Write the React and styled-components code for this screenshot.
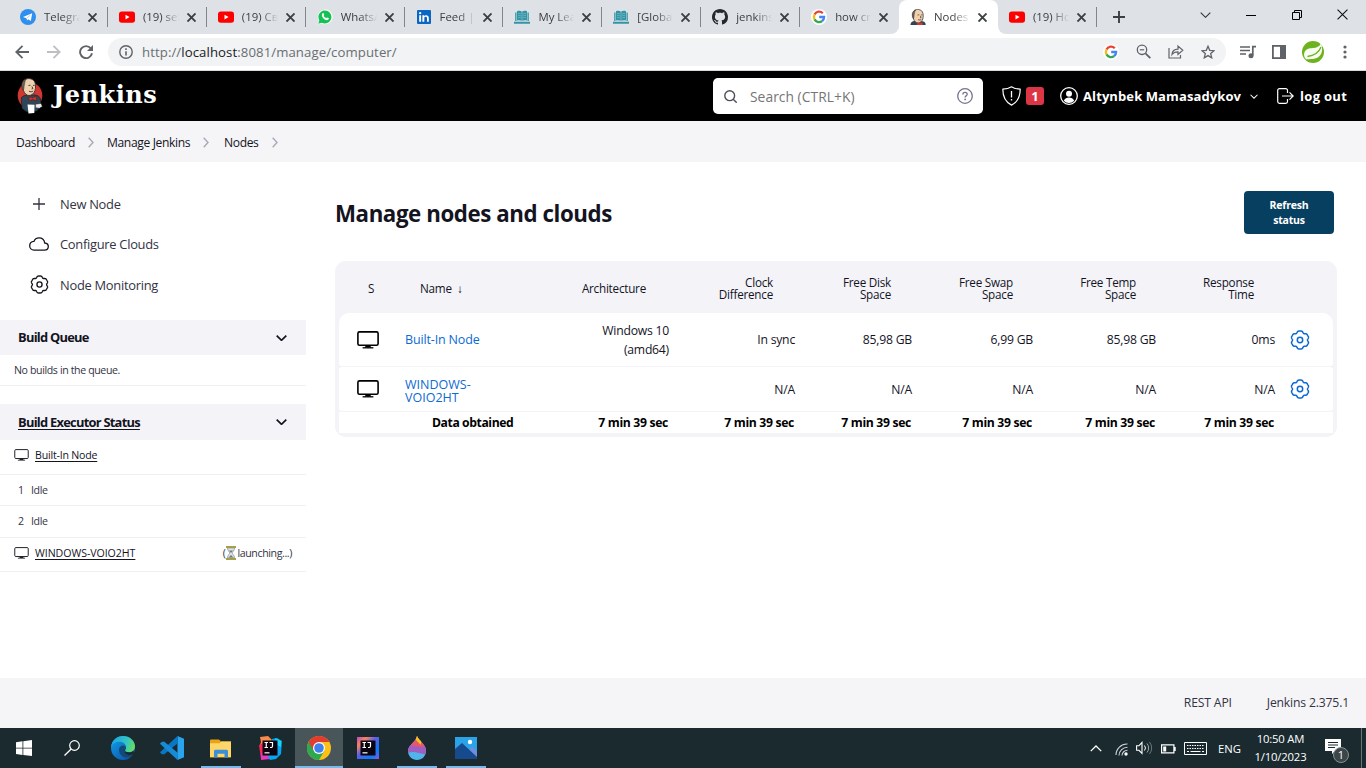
import React from "react";
import styled, { createGlobalStyle } from "styled-components";

const Global = createGlobalStyle`
  * { box-sizing: border-box; }
  html, body { margin: 0; padding: 0; background: #fff; }
  body {
    width: 1366px; height: 768px; overflow: hidden;
    font-family: "Open Sans", "Noto Sans", "Liberation Sans", sans-serif;
    color: #14141f;
  }
  svg { display: block; flex: none; }
`;

/* ---------- icons ---------- */

const Svg = ({ s = 16, w, h, vb, children, ...rest }) => (
  <svg width={w || s} height={h || s} viewBox={vb || `0 0 ${w || s} ${h || s}`} fill="none" {...rest}>
    {children}
  </svg>
);

/* six wide lobes separated by shallow notches */
const GEAR = (() => {
  const pts = [];
  for (let i = 0; i < 180; i++) {
    const t = (i / 180) * Math.PI * 2;
    const notch = Math.pow((1 - Math.cos(6 * t)) / 2, 2.2);
    const tip = Math.pow((1 + Math.cos(6 * t)) / 2, 4) * 0.25;
    const r = 9.15 - 1.7 * notch - tip;
    pts.push(`${(10 + r * Math.sin(t)).toFixed(2)} ${(10 - r * Math.cos(t)).toFixed(2)}`);
  }
  return `M${pts.join("L")}Z`;
})();

const Gear = ({ color = "#14141f", size = 20, sw = 1.5 }) => (
  <Svg s={size} vb="0 0 20 20">
    <path d={GEAR} stroke={color} strokeWidth={sw} strokeLinejoin="round" />
    <circle cx="10" cy="10" r="2.7" stroke={color} strokeWidth={sw} />
  </Svg>
);

const Computer = ({ w = 22, h = 18, sw = 1.6, color = "#000" }) => (
  <Svg w={w} h={h} vb="0 0 22 18">
    <rect x="0.9" y="0.9" width="20.2" height="13.4" rx="1.6" stroke={color} strokeWidth={sw} />
    <path d="M8.6 14.3h4.8l.6 2.2H8z" fill={color} />
    <path d="M5.6 16.8h10.8" stroke={color} strokeWidth="1.3" />
  </Svg>
);

const Cloud = () => (
  <Svg w={20} h={14}>
    <path d="M5 13.1h10.4c2.2 0 3.9-1.5 3.9-3.6 0-2-1.6-3.3-3.6-3.5C15.300 2.800 12.900.8 10 .8 7.500.8 5.700 2.300 4.900 4.400 2.500 4.600.7 6.300.7 8.700c0 2.500 1.900 4.400 4.300 4.400Z" stroke="#14141f" strokeWidth="1.3" />
  </Svg>
);

const Plus = ({ size = 12, color = "#333343", sw = 1.3 }) => (
  <Svg s={size} vb="0 0 12 12">
    <path d="M6 0v12M0 6h12" stroke={color} strokeWidth={sw} />
  </Svg>
);

const Chevron = ({ w = 11, h = 6, color = "#14141f", sw = 1.7, up }) => (
  <Svg w={w} h={h} vb="0 0 11 6">
    <path d={up ? "M.7 5.4 5.500.7l4.800 4.700" : "M.7.6l4.800 4.700L10.300.6"} stroke={color} strokeWidth={sw} />
  </Svg>
);

const CrumbArrow = () => (
  <Svg w={6} h={11}>
    <path d="M.7.8l4.300 4.700-4.300 4.700" stroke="#a9a9b8" strokeWidth="1.4" />
  </Svg>
);

const Close = ({ size = 8, color = "#3c4043", sw = 1.7 }) => (
  <Svg s={size} vb="0 0 8 8">
    <path d="M.4.4l7.200 7.200M7.600.4L.4 7.600" stroke={color} strokeWidth={sw} />
  </Svg>
);

const Telegram = () => (
  <Svg>
    <circle cx="8" cy="8" r="8" fill="#2f8fef" />
    <path d="M3 7.900 12.200 4.200 10.800 11.900 8.200 10.200 7 11.500 6.500 9.200z" fill="#fff" />
    <path d="M6.500 9.200 10.500 6" stroke="#9cc9f5" strokeWidth=".8" />
  </Svg>
);
const YouTube = () => (
  <Svg>
    <rect x="0" y="2.400" width="16" height="11.400" rx="2.800" fill="#f00" />
    <path d="M6.500 5.700v4.800L10.600 8.100z" fill="#fff" />
  </Svg>
);
const WhatsApp = () => (
  <Svg>
    <path d="M.5 15.500 1.700 11.500A7.400 7.400 0 1 1 4.600 14.400z" fill="#fff" />
    <path d="M1.300 14.700 2.300 11.300A6.500 6.500 0 1 1 4.800 13.700z" fill="#14c254" />
    <path d="M5.400 4.500c.6-.7 1.200-.3 1.300 0l.5 1.300c.1.400-.6.900-.5 1.100.6 1.100 1.400 1.800 2.500 2.200.3.100.7-.8 1.100-.7l1.400.7c.4.300.1 1.300-.5 1.700-2.800 1.700-8-3.500-5.800-6.300z" fill="#fff" />
  </Svg>
);
const LinkedIn = () => (
  <Svg>
    <rect x="1" y="1" width="14" height="14" rx="1" fill="#0a66c2" />
    <path d="M3.200 6.300h1.900v6.500H3.200zM6.400 6.300h1.800v.9c.9-1.500 4.600-1.600 4.600 1.700v3.900H11V9.300c0-2-2.700-1.800-2.700 0v3.500H6.400z" fill="#fff" />
    <circle cx="4.150" cy="4.200" r="1.150" fill="#fff" />
  </Svg>
);
const BookSite = () => (
  <Svg>
    <path d="M1.200 3.500h1.300v8.500H1.200zM13.500 3.500h1.300v8.500h-1.300zM0 12.800h16v1.900H0z" fill="#3295a6" />
    <path d="M3 2.300c1.800-.8 3.500-.6 4.800.3v9.200c-1.300-.7-3-.9-4.800-.3zM13 2.300c-1.800-.8-3.500-.6-4.800.3v9.200c1.300-.7 3-.9 4.800-.3z" fill="#3295a6" />
    <path d="M4 4.700c1-.3 2-.3 2.800.1M4 6.700c1-.3 2-.3 2.800.1M4 8.700c1-.3 2-.3 2.800.1M9.200 4.800c.9-.4 1.800-.4 2.800-.1M9.200 6.800c.9-.4 1.800-.4 2.800-.1M9.200 8.800c.9-.4 1.800-.4 2.800-.1" stroke="#8fc8d1" strokeWidth=".6" />
  </Svg>
);
const GitHub = () => (
  <Svg>
    <path fill="#24292f" d="M8 0C3.580 0 0 3.580 0 8c0 3.540 2.290 6.530 5.470 7.590.4.070.55-.17.55-.38 0-.19-.01-.82-.01-1.490-2.010.37-2.530-.49-2.690-.94-.09-.23-.48-.94-.82-1.130-.28-.15-.68-.52-.01-.53.63-.01 1.080.58 1.230.82.72 1.210 1.870.87 2.330.66.07-.52.28-.87.51-1.070-1.780-.2-3.640-.89-3.640-3.950 0-.87.31-1.590.82-2.150-.08-.2-.36-1.020.08-2.120 0 0 .67-.21 2.200.82.64-.18 1.320-.27 2-.27s1.360.09 2 .27c1.530-1.040 2.200-.82 2.200-.82.44 1.100.16 1.920.08 2.120.51.56.82 1.270.82 2.150 0 3.070-1.870 3.750-3.650 3.950.29.25.54.73.54 1.480 0 1.070-.01 1.930-.01 2.200 0 .21.15.46.55.38A8.010 8.010 0 0 0 16 8c0-4.420-3.580-8-8-8z" />
  </Svg>
);
const Google = ({ s = 16 }) => (
  <Svg s={s} vb="0 0 16 16">
    <circle cx="8" cy="8" r="8" fill="#fff" />
    <g strokeWidth="2.300">
      <path d="M11.800 4.200A5.100 5.100 0 0 0 3.500 5.600" stroke="#ea4335" />
      <path d="M3.500 5.600a5.100 5.100 0 0 0 0 4.800" stroke="#fbbc05" />
      <path d="M3.500 10.400a5.100 5.100 0 0 0 7.700 1.600" stroke="#34a853" />
      <path d="M11.200 12A5.100 5.100 0 0 0 13.100 8H8.200" stroke="#4285f4" />
    </g>
  </Svg>
);

const ButlerHead = () => (
  <g>
    <path d="M6.400 12.500C4.800 9 5 4 7.500 2c3-2.400 8-1.700 10 1.500 1.300 2.200 1.300 6.500.5 9-1 3.200-3.500 5-6 5-2.300 0-4.300-1.800-5.600-5z" fill="#efd0b0" stroke="#3b2a24" strokeWidth=".9" />
    <path d="M6.300 12.300c-2-2.800-2.200-6.800-.2-9.200C7 1.900 8 1.300 9.200 1 7.600 3.200 7.900 5 7.300 7c-.4 1.600 0 3.500-1 5.300z" fill="#6d6259" stroke="#3b2a24" strokeWidth=".5" />
    <path d="M11.500 7.500l2-.3M16 7.300l1.600.2M14.900 8.400l1 2.200-1.300.4M12 13.200c1.500.8 3 .7 4.200-.2" stroke="#3b2a24" strokeWidth=".9" />
  </g>
);
const JenkinsFav = () => (
  <Svg vb="2 0 20 20">
    <path d="M2.500 20c.3-3 1.500-4.500 4.500-5l11 .2c2.500.5 3.500 2 3.600 4.800z" fill="#2f4558" />
    <ButlerHead />
    <path d="M11 16.500l3.200 1.300 3.300-1.200.3 3.400h-7z" fill="#d8382c" />
  </Svg>
);
const JenkinsLogo = () => (
  <Svg w={26} h={36}>
    <ellipse cx="13" cy="17.500" rx="12.300" ry="13" fill="#d13832" />
    <path d="M4.200 20c1-2 4-3 7-3h7c3 .3 5 2 5.300 4.500l.5 6-4 5.500-10 1-5-3.500z" fill="#2e4656" stroke="#10181e" strokeWidth=".6" />
    <ButlerHead />
    <path d="M12 18.500l3.400 1.600 3.800-1.700.3 4.200-4-1.200-3.200 1.300z" fill="#d8382c" stroke="#5a1410" strokeWidth=".5" />
    <path d="M10.500 26.500l7 .3-.2 8.200-5.800.5z" fill="#fff" />
    <path d="M18.500 26.200l5.500-.8 1.300 3-3 1.900-3.600-.6z" fill="#ececec" stroke="#333" strokeWidth=".5" />
  </Svg>
);

/* ---------- browser window ---------- */

const Screen = styled.div`
  width: 1366px; height: 768px; display: flex; flex-direction: column; overflow: hidden;
`;

const TabStrip = styled.div`
  height: 34px; background: #dee1e6; display: flex; padding-left: 9px; flex: none;
`;
const tabRadius = { active: "8px 8px 0 0", right: "0 0 8px 0", left: "0 0 0 8px", none: "0" };
const TabBox = styled.div`
  width: 98.900px; height: 34px; display: flex; align-items: center; padding-left: 11px;
  background: ${(p) => (p.$active ? "#fff" : "#dee1e6")};
  border-radius: ${(p) => tabRadius[p.$active ? "active" : p.$edge || "none"]};
`;
const TabCorner = styled.div`background: ${(p) => (p.$edge ? "#fff" : "#dee1e6")};`;
const TabTitle = styled.div`
  width: 37px; margin-left: 8px; overflow: hidden; white-space: nowrap;
  font-size: 11.400px; line-height: 18px; color: #3c4043;
  mask-image: linear-gradient(90deg, #000 50%, transparent 98%);
`;
const TabClose = styled.div`margin-left: 7px;`;
const TabRule = styled.div`
  width: 1px; height: 20px; margin-left: 10px; background: ${(p) => (p.$hide ? "transparent" : "#80868b")};
`;
const WindowTools = styled.div`
  flex: 1; display: flex; align-items: center; justify-content: flex-end; gap: 35.500px; padding: 0 18px 5px 0;
`;
const NewTab = styled.div`align-self: center; margin-left: 16px;`;

const Tab = ({ icon, title, active, edge, noRule }) => (
  <TabCorner $edge={edge}>
    <TabBox $active={active} $edge={edge}>
      {icon}
      <TabTitle>{title}</TabTitle>
      <TabClose><Close size={9} /></TabClose>
      <TabRule $hide={noRule} />
    </TabBox>
  </TabCorner>
);

const Toolbar = styled.div`
  height: 37px; flex: none; background: #fff; border-bottom: 1px solid #d5d9dc;
  display: flex; align-items: center; padding: 0 0 1px 15px;
`;
const NavIcons = styled.div`display: flex; align-items: center; gap: 18px; width: 93px;`;
const Address = styled.div`
  width: 1118px; height: 28px; border-radius: 14px; background: #f1f3f4;
  display: flex; align-items: center; padding: 0 11px;
`;
const Url = styled.div`
  margin-left: 9px; flex: 1; font-size: 13.200px; line-height: 20px; color: #6a6e73; letter-spacing: 0.080px;
  b { font-weight: 400; color: #202124; }
`;
const AddressIcons = styled.div`display: flex; align-items: center; gap: 17px;`;
const ToolIcons = styled.div`display: flex; align-items: center; gap: 14px; margin-left: 14px;`;
const Menu = styled.div`margin-left: 5px;`;

/* ---------- jenkins ---------- */

const Header = styled.header`
  height: 50px; flex: none; background: #000; color: #fff; display: flex; align-items: center; padding-left: 17px;
`;
const Wordmark = styled.div`
  font-family: "DejaVu Serif", serif; font-weight: 700; font-size: 24px; line-height: 30px; flex: none;
  width: 660px; margin-left: 10px; margin-top: -3px; letter-spacing: 0.500px;
`;
const SearchBox = styled.div`
  width: 270px; height: 36px; border-radius: 5px; background: #fff; display: flex; align-items: center; padding: 0 10px 0 11px; flex: none;
`;
const Placeholder = styled.div`flex: 1; margin-left: 13px; font-size: 13.800px; letter-spacing: 0.050px; color: #757575;`;
const Alert = styled.div`display: flex; align-items: center; margin-left: 19px;`;
const Badge = styled.div`
  width: 18px; height: 18px; margin-left: 5px; border-radius: 3px; background: #dc3545;
  font-size: 13px; font-weight: 700; line-height: 18px; text-align: center;
`;
const HeaderLink = styled.div`
  display: flex; align-items: center; font-size: 13px; font-weight: 700; white-space: nowrap;
  margin-left: ${(p) => p.$gap}px; letter-spacing: ${(p) => p.$ls || 0}px;
  span { margin: 0 ${(p) => p.$after || 0}px 0 ${(p) => p.$before}px; }
`;

const Crumbs = styled.nav`
  height: 41px; flex: none; background: #f5f5f7; display: flex; align-items: center; padding: 1px 0 0 16px;
  font-size: 12.100px; letter-spacing: -0.370px;
`;
const Crumb = styled.div`display: flex; align-items: center; width: ${(p) => p.$w}px; gap: 13px; white-space: nowrap;`;

const Body = styled.div`flex: 1; display: flex; min-height: 0;`;
const Side = styled.aside`width: 306px; padding-top: 22px;`;
const Task = styled.div`
  height: ${(p) => p.$h || 40}px; display: flex; align-items: center; font-size: 12.900px; letter-spacing: -0.280px;
  color: #333343; white-space: nowrap;
`;
const TaskIcon = styled.div`width: 20px; margin: -1px 11px 0 29px; display: flex; justify-content: center;`;
const PaneHead = styled.div`
  height: ${(p) => p.$h}px; margin-top: ${(p) => p.$mt}px; background: #f3f3f8; padding: 0 19px 0 18px;
  display: flex; align-items: center; justify-content: space-between; font-size: 12.900px; font-weight: 700;
  letter-spacing: -0.750px;
  span { padding-bottom: 1px; text-decoration: ${(p) => (p.$link ? "underline" : "none")}; text-underline-offset: 2px; }
`;
const PaneRow = styled.div`
  height: ${(p) => p.$h}px; border-bottom: 1px solid #f0f0f3; display: flex; align-items: center;
  padding: 0 14px ${(p) => p.$pb || 0}px ${(p) => p.$pl || 14}px; font-size: 10.600px; color: #333343; letter-spacing: -0.380px;
`;
const NodeLink = styled.span`
  margin-left: 6px; flex: 1; text-decoration: underline; text-underline-offset: 2px; color: #14141f;
  letter-spacing: ${(p) => p.$ls}px;
`;
const ExecNo = styled.span`width: 13px;`;

const Main = styled.main`flex: 1; padding: 29px 29px 0 29px;`;
const TitleRow = styled.div`display: flex; justify-content: space-between; height: 70px; padding-right: 3px;`;
const Title = styled.h1`margin: 8px 0 0; font-size: 22.300px; line-height: 30px; font-weight: 700; letter-spacing: -0.430px;`;
const Refresh = styled.button`
  width: 90px; height: 43px; border: 0; border-radius: 4px; background: #073f60; color: #fff; padding: 0 20px;
  font: 700 10.500px/15px "Open Sans", sans-serif; letter-spacing: -0.200px;
`;
const Table = styled.div`
  width: 1002px; background: #f3f3f8; border-radius: 11px; padding: 0 4px 4px; color: #14141f;
`;
const columns = "54px 130px 146px 126px 117px 121px 123px 119px 58px";
const HeadRow = styled.div`
  height: 52px; display: grid; grid-template-columns: ${columns}; align-items: center;
  font-size: 11.700px; line-height: 12px; letter-spacing: -0.230px; padding-top: 1px;
`;
const HeadCell = styled.div`
  text-align: ${(p) => p.$align || "right"};
  padding: 0 ${(p) => p.$pr || 0}px 0 ${(p) => p.$pl || (p.$align ? 0 : 30)}px;
`;
const Row = styled.div`
  height: ${(p) => p.$h}px; display: grid; grid-template-columns: ${columns}; align-items: center; background: #fff;
  border-radius: ${(p) => p.$radius || "0"}; margin-bottom: ${(p) => (p.$last ? 0 : 1)}px;
  font-size: 12.200px; font-weight: ${(p) => (p.$last ? 700 : 400)};
  letter-spacing: ${(p) => (p.$last ? -0.330 : -0.220)}px;
  color: ${(p) => (p.$last ? "#000" : "#14141f")};
`;
const Cell = styled.div`text-align: right; line-height: 19px; white-space: pre-line; padding-right: ${(p) => p.$pr || 0}px;`;
const IconCell = styled.div`padding-left: ${(p) => p.$pl}px;`;
const NameCell = styled.div`
  padding: ${(p) => p.$pt || 0}px 0 0 12px; color: #0b6ad4; font-size: 12.500px; line-height: 13px; font-weight: 500;
  letter-spacing: ${(p) => p.$ls || 0}px; white-space: pre-line;
`;
const SumCell = styled.div`padding-left: 39px; white-space: nowrap; letter-spacing: -0.420px;`;

const Footer = styled.footer`
  height: 50px; flex: none; background: #f5f5f7; display: flex; align-items: center; justify-content: flex-end;
  gap: 35px; padding: 0 17px 2px 0; font-size: 12.200px; letter-spacing: -0.170px; color: #333343;
`;

/* ---------- taskbar ---------- */

const Taskbar = styled.div`
  height: 40px; flex: none; background: #1a2a2f; display: flex; color: #fff;
`;
const TaskItem = styled.div`
  width: ${(p) => p.$w || 48}px; height: 40px; margin-right: ${(p) => p.$mr ?? 1}px; display: flex; align-items: center; justify-content: center;
  background: ${(p) => (p.$active ? "#485559" : "transparent")};
  box-shadow: ${(p) => (p.$running ? "inset 0 -2px #76b9ed" : "none")};
`;
const Tray = styled.div`margin-left: auto; display: flex; align-items: center; height: 40px;`;
const TrayItem = styled.div`margin-left: ${(p) => p.$ml}px; font-size: 11.300px; padding-top: ${(p) => p.$pt || 0}px;`;
const Clock = styled.div`
  margin: -1px 0 0 13px; width: 53px; font-size: 11.300px; line-height: 18px; text-align: center; white-space: nowrap;
  letter-spacing: -0.180px;
`;
const Notice = styled.div`position: relative; margin: 4px 0 0 18px; width: 24px; height: 22px;`;
const NoticeCount = styled.div`
  position: absolute; left: 8px; top: 8px; width: 16px; height: 16px; border-radius: 50%; background: #3c4649;
  border: 1px solid #8a9092; font-size: 11px; line-height: 14px; text-align: center;
`;
const PeekRule = styled.div`width: 1px; height: 40px; background: #6a7679; margin: 0 4px 0 12px;`;

const tabs = [
  { icon: <Telegram />, title: "Telegram" },
  { icon: <YouTube />, title: "(19) sel" },
  { icon: <YouTube />, title: "(19) Све" },
  { icon: <WhatsApp />, title: "WhatsApp" },
  { icon: <LinkedIn />, title: "Feed | Li" },
  { icon: <BookSite />, title: "My Learn" },
  { icon: <BookSite />, title: "[Global" },
  { icon: <GitHub />, title: "jenkinsci" },
  { icon: <Google />, title: "how crea", edge: "right", noRule: true },
  { icon: <JenkinsFav />, title: "Nodes [", active: true, noRule: true },
  { icon: <YouTube />, title: "(19) How", edge: "left" },
];

const headers = [
  ["Architecture", 23], ["Clock Difference", 22], ["Free Disk Space", 21],
  ["Free Swap Space", 20], ["Free Temp Space", 20], ["Response Time", 21],
];

const nodes = [
  { name: "Built-In Node", h: 53, r: "10px 10px 3px 3px", ls: -0.15, pt: 0, cells: ["Windows 10\n(amd64)", "In sync", "85,98 GB", "6,99 GB", "85,98 GB", "0ms"] },
  { name: "WINDOWS-\nVOIO2HT", h: 44, r: "3px", ls: 0, pt: 4, cells: ["", "N/A", "N/A", "N/A", "N/A", "N/A"] },
];

const IntelliJ = ({ framed }) => (
  <Svg s={24}>
    <defs>
      <linearGradient id="ij" x1="0" y1="0" x2="24" y2="24" gradientUnits="userSpaceOnUse">
        <stop stopColor="#b13de0" /><stop offset=".25" stopColor="#f9835c" /><stop offset=".45" stopColor="#5b5fe8" /><stop offset=".75" stopColor="#087cfa" /><stop offset="1" stopColor="#b04ae0" />
      </linearGradient>
    </defs>
    {framed ? (
      <rect x="1" y="1" width="22" height="22" fill="url(#ij)" />
    ) : (
      <g>
        <path d="M2 1l8-1 4 4-6 8-6-3 1-3z" fill="#fc8a4c" />
        <path d="M1 9l6-3 2 12-6 5z" fill="#fe2857" />
        <path d="M3 17l12 1-3 5-9 1z" fill="#e838c0" />
        <path d="M14 3l5-1 5 3-1 13-5 5-6 1-2-4z" fill="#07a5f2" />
        <path d="M17 2l6 3v6l-4-2z" fill="#18d5f0" />
      </g>
    )}
    <rect x="4.500" y="4.500" width="15" height="15" fill="#0c0410" />
    <path d="M6.500 6.500h3.500M6.500 11.500h3.500M8.250 6.500v5M11.500 6.500h3v3.500c0 1.200-.8 1.600-2.500 1.500" stroke="#fff" strokeWidth="1.200" />
    <path d="M6.500 16.800h5" stroke="#ccc" strokeWidth="1.500" />
  </Svg>
);

const Edge = () => (
  <Svg s={24}>
    <defs>
      <linearGradient id="e1" x1="2" y1="4" x2="24" y2="12" gradientUnits="userSpaceOnUse"><stop stopColor="#1ea7e0" /><stop offset=".6" stopColor="#35c6c0" /><stop offset="1" stopColor="#6fe04f" /></linearGradient>
      <linearGradient id="e2" x1="0" y1="10" x2="14" y2="24" gradientUnits="userSpaceOnUse"><stop stopColor="#0f8fdc" /><stop offset="1" stopColor="#0f5ab0" /></linearGradient>
    </defs>
    <circle cx="12" cy="12" r="12" fill="url(#e2)" />
    <path d="M0 11.500C.6 4.700 5.700 0 12 0c7 0 12 5 12 10.300 0 4-3 6-6 6-2.700 0-4.300-.9-4.300-2 0-.8 1.200-1.300 1.200-3.300C14.900 8 12 5.800 8.500 5.800 4 5.800 1 8.500 0 11.500z" fill="url(#e1)" />
    <path d="M14.900 11C13 8 8 9.500 8 14c0 4.500 4 8 8.500 7.500 2.500-.3 4.500-1.500 5.800-3.300.3-.4-.1-.8-.6-.5-2 1-5.700.7-7.500-1.400-1.200-1.500.8-2.300.7-5.300z" fill="#12466f" opacity=".9" />
    <path d="M14.900 11c.3 2-1.200 2.400-1.200 3.300 0 1.100 1.600 2 4.300 2 1.700 0 3.200-.5 4.300-1.500L24 19.500l-1.500 4.500H17l6-6c-3.500 2-8 1-9.300-1.500z" fill="#1a2a2f" />
  </Svg>
);

export default function App() {
  return (
    <Screen>
      <Global />
      <TabStrip>
        {tabs.map((t, i) => <Tab key={i} {...t} />)}
        <NewTab><Plus size={12} color="#3c4043" sw={1.900} /></NewTab>
        <WindowTools>
          <Chevron w={11} h={6} color="#333" sw={1.100} />
          <Svg w={10} h={10}><path d="M0 5.500h10" stroke="#000" /></Svg>
          <Svg s={10}><path d="M.5 2.500h7v7h-7zM2.500 2.500v-2h7v7h-2" stroke="#000" /></Svg>
          <Close size={11} color="#111" sw={0.800} />
        </WindowTools>
      </TabStrip>

      <Toolbar>
        <NavIcons>
          <Svg w={14} h={14}><path d="M14 7H1.500M7.500.8 1.300 7l6.200 6.200" stroke="#5f6368" strokeWidth="1.800" /></Svg>
          <Svg w={14} h={14}><path d="M0 7h12.500M6.500.8 12.700 7l-6.200 6.200" stroke="#bdbfc2" strokeWidth="1.800" /></Svg>
          <Svg w={14} h={14}><path d="M11.800 3.400A6 6 0 1 0 13 8.300" stroke="#5f6368" strokeWidth="1.900" /><path d="M14 0v6H8z" fill="#5f6368" /></Svg>
        </NavIcons>
        <Address>
          <Svg s={14}><circle cx="7" cy="7" r="6.200" stroke="#5f6368" strokeWidth="1.400" /><path d="M7 6.200v4.300M7 3.300v1.600" stroke="#5f6368" strokeWidth="1.600" /></Svg>
          <Url>http://<b>localhost</b>:8081/manage/computer/</Url>
          <AddressIcons>
            <Google s={16} />
            <Svg s={15}><circle cx="6" cy="5.800" r="4.700" stroke="#5f6368" strokeWidth="1.300" /><path d="M9.500 9.300l4.800 4.800" stroke="#5f6368" strokeWidth="1.800" /><path d="M3.800 5.800h4.400" stroke="#5f6368" strokeWidth="1.200" /></Svg>
            <Svg w={16} h={15}><path d="M1 4v10h11.500v-3M4 10.500c.3-3.500 2.500-5.200 6-5.300V2l4.800 4.300L10 10.500V7.800C7.500 7.700 5.500 8.500 4 10.500z" stroke="#5f6368" strokeWidth="1.200" /></Svg>
            <Svg s={14}><path d="M7 1.300l1.700 4 4.300.4-3.300 2.900 1 4.200L7 10.600l-3.700 2.200 1-4.200L1 5.700l4.300-.4z" stroke="#5f6368" strokeWidth="1.300" /></Svg>
          </AddressIcons>
        </Address>
        <ToolIcons>
          <Svg w={16} h={14}><path d="M0 2h10M0 5.500h10M0 9h6" stroke="#5f6368" strokeWidth="1.500" /><path d="M12.800 10.500V1.700H16" stroke="#5f6368" strokeWidth="1.700" /><circle cx="11" cy="10.800" r="2.500" fill="#5f6368" /></Svg>
          <Svg w={18} h={14}><rect x="2.900" y=".9" width="12.200" height="12.200" stroke="#5f6368" strokeWidth="1.800" /><path d="M10 1h5v12h-5z" fill="#5f6368" /></Svg>
          <Svg s={22}>
            <circle cx="11" cy="11" r="11" fill="#6db31f" />
            <path d="M19 2.500c2.300 5.500 1.200 12.200-4.300 14.600-3 1.300-7 1.200-10.700 1.100-1.700-1.700-2.500-4.500-1.600-6.800C3.800 7.800 7.300 7.300 11 7c3.800-.2 6.500-1.500 8-4.500z" fill="#f8fff2" />
            <path d="M19 6c-2 5.500-6.500 8.500-13.500 9.500" stroke="#6db31f" strokeWidth="1.300" />
          </Svg>
          <Menu><Svg w={4} h={16}><circle cx="2" cy="3" r="1.600" fill="#5f6368" /><circle cx="2" cy="8" r="1.600" fill="#5f6368" /><circle cx="2" cy="13" r="1.600" fill="#5f6368" /></Svg></Menu>
        </ToolIcons>
      </Toolbar>

      <Header>
        <JenkinsLogo />
        <Wordmark>Jenkins</Wordmark>
        <SearchBox>
          <Svg s={13}><circle cx="5.700" cy="5.700" r="4.900" stroke="#4d4d5c" strokeWidth="1.400" /><path d="M9.200 9.200l3.500 3.500" stroke="#4d4d5c" strokeWidth="1.400" /></Svg>
          <Placeholder>Search (CTRL+K)</Placeholder>
          <Svg s={16}><circle cx="8" cy="8" r="7.300" stroke="#73738c" strokeWidth="1.300" /><path d="M5.900 6.400c0-1.400 1-2 2.100-2s2.200.7 2.200 1.900c0 1.600-2.100 1.500-2.100 3.100" stroke="#73738c" strokeWidth="1.300" /><circle cx="8.100" cy="11.400" r=".9" fill="#73738c" /></Svg>
        </SearchBox>
        <Alert>
          <Svg w={19} h={20}><path d="M9.500.8C7 2.500 4 3.100.8 3.100c0 8 2.500 13 8.700 16 6.200-3 8.700-8 8.700-16-3.200 0-6.200-.6-8.700-2.300z" stroke="#fff" strokeWidth="1.200" strokeLinejoin="round" /><path d="M9.500 5v6.500M9.500 13v1.500" stroke="#fff" strokeWidth="1.300" /></Svg>
          <Badge>1</Badge>
        </Alert>
        <HeaderLink $gap={16} $before={5} $after={9} $ls={0.1}>
          <Svg s={18}><circle cx="9" cy="9" r="8.300" stroke="#fff" strokeWidth="1.300" /><circle cx="9" cy="6.800" r="3" fill="#fff" /><path d="M3.800 13.800c1-2.500 3-3.400 5.200-3.400s4.200.9 5.200 3.400A7 7 0 0 1 9 16.100a7 7 0 0 1-5.200-2.300z" fill="#fff" /></Svg>
          <span>Altynbek Mamasadykov</span>
          <Chevron w={8} h={5} color="#fff" sw={1.400} />
        </HeaderLink>
        <HeaderLink $gap={19} $before={6} $ls={0.3}>
          <Svg w={17} h={16}><path d="M10.500 5V2.500C10.500 1.300 9.800.7 8.700.7H2.500C1.400.7.700 1.300.7 2.500v11c0 1.200.7 1.800 1.800 1.800h6.200c1.100 0 1.800-.6 1.800-1.800V11M5 8h11M12.500 4.300 16.200 8l-3.700 3.700" stroke="#fff" strokeWidth="1.200" /></Svg>
          <span>log out</span>
        </HeaderLink>
      </Header>

      <Crumbs>
        <Crumb $w={91}>Dashboard <CrumbArrow /></Crumb>
        <Crumb $w={117}>Manage Jenkins <CrumbArrow /></Crumb>
        <Crumb $w={80}>Nodes <CrumbArrow /></Crumb>
      </Crumbs>

      <Body>
        <Side>
          <Task><TaskIcon><Plus /></TaskIcon>New Node</Task>
          <Task><TaskIcon><Cloud /></TaskIcon>Configure Clouds</Task>
          <Task $h={42}><TaskIcon><Gear size={19} sw={1.4} /></TaskIcon>Node Monitoring</Task>
          <PaneHead $h={35} $mt={14}><span>Build Queue</span><Chevron /></PaneHead>
          <PaneRow $h={31}>No builds in the queue.</PaneRow>
          <PaneHead $h={36} $mt={18} $link><span>Build Executor Status</span><Chevron /></PaneHead>
          <PaneRow $h={35} $pb={4}><Computer w={15} h={12} color="#22222c" sw={1.5} /><NodeLink $ls={-0.2}>Built-In Node</NodeLink></PaneRow>
          <PaneRow $h={31} $pl={18}><ExecNo>1</ExecNo>Idle</PaneRow>
          <PaneRow $h={32} $pl={18} $pb={1}><ExecNo>2</ExecNo>Idle</PaneRow>
          <PaneRow $h={34} $pb={3}>
            <Computer w={15} h={12} color="#22222c" sw={1.5} /><NodeLink $ls={-0.05}>WINDOWS-VOIO2HT</NodeLink>
            <span>(</span>
            <Svg w={12} h={14}><path d="M1 0h10v2H1zM1 12h10v2H1z" fill="#a8a23a" /><path d="M2.500 2h7c0 3-2.300 4-2.300 5s2.300 2 2.300 5h-7c0-3 2.300-4 2.300-5s-2.300-2-2.300-5z" fill="#dfe4e8" stroke="#8f959a" strokeWidth=".8" /><path d="M4 4.500h4L6 7zM3.500 11.500 6 9l2.500 2.500z" fill="#777" /></Svg>
            <span>launching...)</span>
          </PaneRow>
        </Side>

        <Main>
          <TitleRow>
            <Title>Manage nodes and clouds</Title>
            <Refresh>Refresh status</Refresh>
          </TitleRow>
          <Table>
            <HeadRow>
              <HeadCell $align="left" $pl={29}>S</HeadCell>
              <HeadCell $align="left" $pl={27}>Name &nbsp;↓</HeadCell>
              {headers.map(([label, pr]) => <HeadCell key={label} $pr={pr}>{label}</HeadCell>)}
            </HeadRow>
            {nodes.map((n) => (
              <Row key={n.name} $h={n.h} $radius={n.r}>
                <IconCell $pl={18}><Computer /></IconCell>
                <NameCell $ls={n.ls} $pt={n.pt}>{n.name}</NameCell>
                {n.cells.map((c, i) => <Cell key={i}>{c}</Cell>)}
                <IconCell $pl={15}><Gear color="#0b6ad4" /></IconCell>
              </Row>
            ))}
            <Row $h={21} $last>
              <span />
              <SumCell>Data obtained</SumCell>
              {[0, 1, 2, 3, 4, 5].map((i) => <Cell key={i} $pr={1}>7 min 39 sec</Cell>)}
            </Row>
          </Table>
        </Main>
      </Body>

      <Footer><span>REST API</span><span>Jenkins 2.375.1</span></Footer>

      <Taskbar>
        <TaskItem $mr={0}><Svg s={16}><path d="M0 2.200 6.500 1.300v6.400H0zM7.300 1.200 16 0v7.700H7.300zM0 8.500h6.500v6.400L0 14zM7.300 8.500H16V16l-8.700-1.100z" fill="#fff" /></Svg></TaskItem>
        <TaskItem $mr={3}><Svg s={16}><circle cx="10.500" cy="5.500" r="4.800" stroke="#fff" strokeWidth="1.200" /><path d="M7.200 9 .5 15.500" stroke="#fff" strokeWidth="1.300" /></Svg></TaskItem>
        <TaskItem><Edge /></TaskItem>
        <TaskItem $mr={5}>
          <Svg s={24}><path d="M17.500 0 24 2.800v18.400L17.500 24z" fill="#2aa4ee" /><path d="M17.500 0 18 7 4 18.500 1.500 18 0 16.300z" fill="#0a77c4" /><path d="M0 7.700 1.500 6 4 5.500 18 17l-.5 7z" fill="#168bd8" /></Svg>
        </TaskItem>
        <TaskItem $w={40} $mr={5} $running>
          <Svg w={22} h={19}><path d="M0 1.500C0 .8.500.4 1 .4h8l2 2h10v15.800H0z" fill="#e8a317" /><path d="M0 4.200h9.500l2-1.700H21v15.700H0z" fill="#ffd667" /><path d="M4 18.500v-6.300c0-.9.600-1.500 1.500-1.500h11c.9 0 1.500.6 1.500 1.500v6.300h-3.500v-3.800h-7v3.800z" fill="#3a8fd8" /></Svg>
        </TaskItem>
        <TaskItem $mr={1}><IntelliJ /></TaskItem>
        <TaskItem $active $running>
          <Svg s={24}><circle cx="12" cy="12" r="12" fill="#fbc116" /><path d="M12 12 1.600 6A12 12 0 0 0 12 24l5.200-9z" fill="#2da94f" /><path d="M12 12V6h10.400A12 12 0 0 0 1.600 6l5.200 9z" fill="#e33b2e" /><circle cx="12" cy="12" r="6" fill="#fff" /><circle cx="12" cy="12" r="4.800" fill="#3f80ed" /></Svg>
        </TaskItem>
        <TaskItem $mr={5}><IntelliJ framed /></TaskItem>
        <TaskItem $w={40} $mr={9} $running>
          <Svg w={20} h={24}>
            <clipPath id="drop"><path d="M10 0c2 5 9 8 9 15 0 5-4 9-9 9s-9-4-9-9C1 9 9 6 10 0z" /></clipPath>
            <g clipPath="url(#drop)"><path d="M0 0h20v24H0z" fill="#4fb5ea" /><path d="M0 0h20v14c-6 1-10-4-20 2z" fill="#e5566f" /><path d="M0 10c8-2 12 3 20 0v8c-7 1-11-4-20-1z" fill="#a05fc0" /><path d="M8 0h6v9L9 4z" fill="#f9c414" /></g>
          </Svg>
        </TaskItem>
        <TaskItem $w={40} $running>
          <Svg s={22}><path d="M0 0h22v22H0z" fill="#2aa3e8" /><path d="M13 14l4-4.500 5 4.500v8h-9z" fill="#6d8ee0" /><path d="M0 12l7-6 15 14v2H0z" fill="#174a8c" /><circle cx="15" cy="5" r="2.200" fill="#fff" /></Svg>
        </TaskItem>

        <Tray>
          <TrayItem $ml={0}><Chevron w={12} h={7} color="#fff" sw={1.200} up /></TrayItem>
          <TrayItem $ml={13} $pt={2}><Svg s={13}><path d="M1 12A11 11 0 0 1 12.500 1M4 12.500a8.500 8.500 0 0 1 8.500-8.300M7 12.500a5.500 5.500 0 0 1 5.500-5.300" stroke="#cfd4d6" strokeWidth="1.100" /><circle cx="11" cy="11" r="1.700" fill="#fff" /></Svg></TrayItem>
          <TrayItem $ml={8}><Svg w={17} h={14}><path d="M.6 4.800h2.300L6 1.500v11L2.900 9.300H.6z" stroke="#fff" strokeWidth="1.100" /><path d="M8.500 4.500a4 4 0 0 1 0 5" stroke="#fff" /><path d="M11 2.500a7 7 0 0 1 0 9" stroke="#a0a8aa" /><path d="M13.500 1a9.500 9.500 0 0 1 0 12" stroke="#6d7779" /></Svg></TrayItem>
          <TrayItem $ml={8} $pt={2}><Svg w={15} h={10}><path d="M.6.900h12.300v8H.6z" stroke="#fff" strokeWidth="1.200" /><path d="M2.200 2.400h3v5h-3zM13 3h1.700v4H13z" fill="#fff" /></Svg></TrayItem>
          <TrayItem $ml={8}><Svg w={23} h={13}><path d="M.5.5h22v12H.5z" stroke="#fff" /><path d="M3 3.500h17M3 6.500h17" stroke="#fff" strokeDasharray="1.500 1" /><path d="M3 9.500h2M6.500 9.500h10M18 9.500h2" stroke="#fff" /></Svg></TrayItem>
          <TrayItem $ml={11}>ENG</TrayItem>
          <Clock>10:50 AM<br />1/10/2023</Clock>
          <Notice>
            <Svg w={16} h={15}><path d="M0 0h16v12H10l-3 3v-3H0z" fill="#fff" /><path d="M3 3.500h10M3 6h10M3 8.500h7" stroke="#1a2a2f" /></Svg>
            <NoticeCount>1</NoticeCount>
          </Notice>
          <PeekRule />
        </Tray>
      </Taskbar>
    </Screen>
  );
}
